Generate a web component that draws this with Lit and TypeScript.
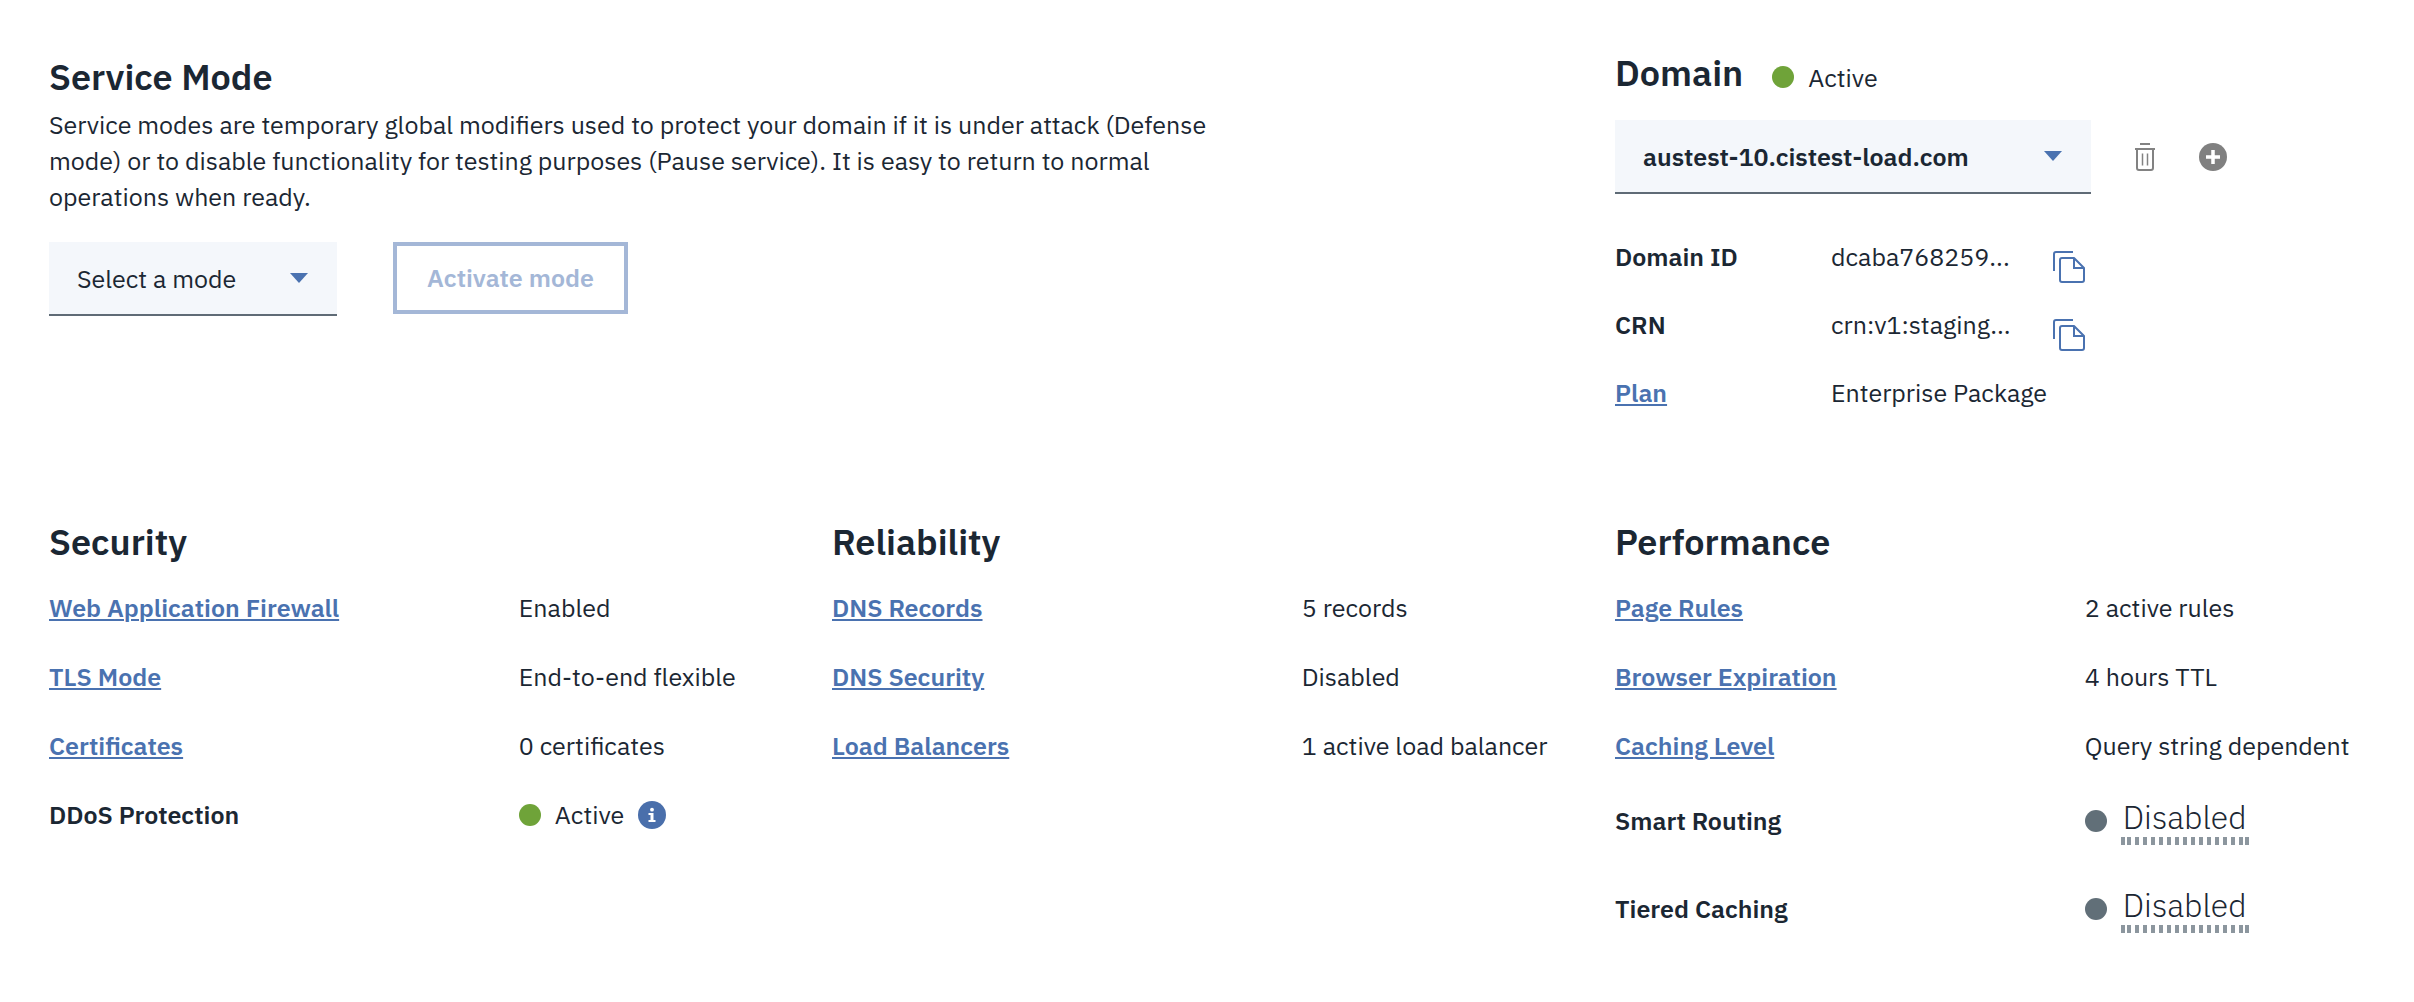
import { LitElement, html, css, nothing, type TemplateResult } from "lit";
import { customElement, property } from "lit/decorators.js";

type Kind = "text" | "status" | "toggle";

interface Entry {
  label: string;
  value: string;
  href?: string;
  kind?: Kind;
}

interface Group {
  title: string;
  entries: Entry[];
}

const GROUPS: Group[] = [
  {
    title: "Security",
    entries: [
      { label: "Web Application Firewall", value: "Enabled", href: "#waf" },
      { label: "TLS Mode", value: "End-to-end flexible", href: "#tls" },
      { label: "Certificates", value: "0 certificates", href: "#certificates" },
      { label: "DDoS Protection", value: "Active", kind: "status" },
    ],
  },
  {
    title: "Reliability",
    entries: [
      { label: "DNS Records", value: "5 records", href: "#dns-records" },
      { label: "DNS Security", value: "Disabled", href: "#dns-security" },
      { label: "Load Balancers", value: "1 active load balancer", href: "#load-balancers" },
    ],
  },
  {
    title: "Performance",
    entries: [
      { label: "Page Rules", value: "2 active rules", href: "#page-rules" },
      { label: "Browser Expiration", value: "4 hours TTL", href: "#browser-expiration" },
      { label: "Caching Level", value: "Query string dependent", href: "#caching-level" },
      { label: "Smart Routing", value: "Disabled", kind: "toggle" },
      { label: "Tiered Caching", value: "Disabled", kind: "toggle" },
    ],
  },
];

const caretIcon = html`<svg class="caret" viewBox="0 0 18 10" aria-hidden="true">
  <path d="M0 0h18L9 10z" fill="#4a72b0" />
</svg>`;

const trashIcon = html`<svg class="icon-trash" viewBox="0 0 20 28" aria-hidden="true">
  <g fill="none" stroke="#828282" stroke-width="2">
    <path d="M5 1h10M0 6h20" />
    <path d="M2 6v19a2 2 0 0 0 2 2h12a2 2 0 0 0 2-2V6" />
    <path d="M7.5 10.5v12M12.5 10.5v12" stroke-width="1.5" />
  </g>
</svg>`;

const addIcon = html`<svg class="icon-round" viewBox="0 0 28 28" aria-hidden="true">
  <circle cx="14" cy="14" r="14" fill="#808080" />
  <path d="M14 7v14M7 14h14" stroke="#fff" stroke-width="3.5" />
</svg>`;

const infoIcon = html`<svg class="icon-round" viewBox="0 0 28 28" aria-hidden="true">
  <circle cx="14" cy="14" r="14" fill="#4a6fab" />
  <circle cx="14" cy="8.7" r="1.9" fill="#fff" />
  <path d="M10.5 12h5v7h2v2h-7v-2h2v-5h-2z" fill="#fff" />
</svg>`;

const copyIcon = html`<svg class="icon-copy" viewBox="0 0 32 32" aria-hidden="true">
  <g fill="none" stroke="#4a72b0" stroke-width="2">
    <path d="M1 20V3a2 2 0 0 1 2-2h17" />
    <path d="M21 7H9a2 2 0 0 0-2 2v20a2 2 0 0 0 2 2h20a2 2 0 0 0 2-2V17z" stroke-linejoin="round" />
    <path d="M21 7v10h10" />
  </g>
</svg>`;

const shared = css`
  :host {
    display: block;
    color: #1b2733;
    font: 400 25px/36px "IBM Plex Sans", Roboto, "Liberation Sans", sans-serif;
  }
  h2 {
    margin: 0;
    font-size: 36px;
    font-weight: 600;
    line-height: 44px;
  }
  a,
  .term {
    font-weight: 600;
  }
  a {
    color: #4a72b0;
    text-decoration: underline;
    text-decoration-thickness: 2px;
    text-underline-offset: 2px;
  }
  button {
    display: block;
    padding: 0;
    border: 0;
    background: none;
    color: inherit;
    font: inherit;
    cursor: pointer;
  }
  svg {
    display: block;
    flex: none;
  }
  .dot {
    flex: none;
    width: 22px;
    height: 22px;
    border-radius: 50%;
    background: #6fa339;
  }
  .dot-off {
    background: #616f78;
  }
  .icon-round {
    width: 28px;
    height: 28px;
  }
`;

@customElement("pick-list")
class PickList extends LitElement {
  @property() label = "";
  @property() option = "";

  static styles = [
    shared,
    css`
      .box {
        display: grid;
        align-items: center;
        background: #f4f7fb;
        border-bottom: 2px solid #5f6b76;
      }
      select,
      .caret {
        grid-area: 1 / 1;
      }
      select {
        width: 100%;
        height: 72px;
        padding: 2px 64px 0 28px;
        border: 0;
        background: none;
        color: inherit;
        font: inherit;
        appearance: none;
      }
      .caret {
        justify-self: end;
        width: 18px;
        height: 10px;
        margin-right: 29px;
        pointer-events: none;
      }
    `,
  ];

  render() {
    return html`<div class="box">
      <select aria-label=${this.label}>
        <option>${this.option}</option>
      </select>
      ${caretIcon}
    </div>`;
  }
}

@customElement("service-mode")
class ServiceMode extends LitElement {
  static styles = [
    shared,
    css`
      p {
        margin: 8px 0 27px;
        max-width: 75%;
      }
      .controls {
        display: flex;
        gap: 56px;
        align-items: flex-start;
      }
      .mode {
        width: 288px;
      }
      .activate {
        padding: 14px 30px;
        border: 4px solid #a4b7d7;
        color: #a4b7d7;
        font-weight: 600;
      }
    `,
  ];

  render() {
    return html`
      <h2>Service Mode</h2>
      <p>
        Service modes are temporary global modifiers used to protect your domain if it is under
        attack (Defense mode) or to disable functionality for testing purposes (Pause service). It
        is easy to return to normal operations when ready.
      </p>
      <div class="controls">
        <pick-list class="mode" label="Service mode" option="Select a mode"></pick-list>
        <button class="activate" disabled>Activate mode</button>
      </div>
    `;
  }
}

@customElement("domain-panel")
class DomainPanel extends LitElement {
  static styles = [
    shared,
    css`
      .head {
        display: flex;
        align-items: center;
      }
      .head .dot {
        margin: 8px 14px 0 29px;
      }
      .state {
        margin-top: 10px;
      }
      .picker {
        display: flex;
        align-items: center;
        margin-top: 24px;
      }
      .domain {
        flex: none;
        width: 476px;
        font-weight: 600;
      }
      .remove {
        margin: 0 44px;
      }
      .icon-trash {
        width: 20px;
        height: 28px;
      }
      .facts {
        display: grid;
        grid-template-columns: 216px 222px 1fr;
        row-gap: 32px;
        margin: 45px 0 0;
      }
      .facts dd {
        margin: 0;
        white-space: nowrap;
      }
      .facts .copy {
        height: 24px;
        margin-top: 12px;
        justify-self: start;
      }
      .icon-copy {
        width: 32px;
        height: 32px;
      }
    `,
  ];

  render() {
    return html`
      <div class="head">
        <h2>Domain</h2>
        <span class="dot"></span>
        <span class="state">Active</span>
      </div>
      <div class="picker">
        <pick-list class="domain" label="Domain" option="austest-10.cistest-load.com"></pick-list>
        <button class="remove" aria-label="Delete domain">${trashIcon}</button>
        <button aria-label="Add domain">${addIcon}</button>
      </div>
      <dl class="facts">
        <dt class="term">Domain ID</dt>
        <dd>dcaba768259...</dd>
        <dd class="copy"><button aria-label="Copy domain ID">${copyIcon}</button></dd>
        <dt class="term">CRN</dt>
        <dd>crn:v1:staging...</dd>
        <dd class="copy"><button aria-label="Copy CRN">${copyIcon}</button></dd>
        <dt><a href="#plan">Plan</a></dt>
        <dd>Enterprise Package</dd>
      </dl>
    `;
  }
}

@customElement("feature-group")
class FeatureGroup extends LitElement {
  @property({ attribute: false }) group!: Group;

  static styles = [
    shared,
    css`
      dl {
        margin: 26px 0 0;
      }
      .row {
        display: grid;
        grid-template-columns: 60% 40%;
        align-items: center;
        margin-bottom: 33px;
      }
      .row-toggle {
        margin-bottom: 40px;
      }
      dd {
        display: flex;
        align-items: center;
        gap: 14px;
        margin: 0;
        white-space: nowrap;
      }
      .toggle {
        padding: 0 2px 8px;
        font-size: 32px;
        font-weight: 300;
        line-height: 40px;
        background:
          linear-gradient(#8c969e, #8c969e) left bottom / 4px 8px no-repeat,
          linear-gradient(#8c969e, #8c969e) right bottom / 4px 8px no-repeat,
          linear-gradient(90deg, #8c969e 2px, transparent 2px 6px, #8c969e 6px)
            left bottom / 8px 8px repeat-x;
      }
    `,
  ];

  private value(entry: Entry): TemplateResult | string {
    switch (entry.kind) {
      case "status":
        return html`<span class="dot"></span>${entry.value}
          <button aria-label="About ${entry.label}">${infoIcon}</button>`;
      case "toggle":
        return html`<span class="dot dot-off"></span><button class="toggle">${entry.value}</button>`;
      default:
        return entry.value;
    }
  }

  render() {
    return html`
      <h2>${this.group?.title ?? nothing}</h2>
      <dl>
        ${this.group?.entries.map(
          (entry) => html`<div class="row ${entry.kind === "toggle" ? "row-toggle" : ""}">
            <dt class="term">
              ${entry.href ? html`<a href=${entry.href}>${entry.label}</a>` : entry.label}
            </dt>
            <dd>${this.value(entry)}</dd>
          </div>`,
        )}
      </dl>
    `;
  }
}

@customElement("app-root")
class AppRoot extends LitElement {
  static styles = [
    shared,
    css`
      :host {
        background: #fff;
      }
      main {
        display: grid;
        grid-template-columns: repeat(3, 1fr);
        padding: 50px 16px 50px 49px;
      }
      .mode {
        grid-column: span 2;
        padding-top: 5px;
      }
      .group {
        margin-top: 109px;
      }
    `,
  ];

  render() {
    return html`<main>
      <service-mode class="mode"></service-mode>
      <domain-panel></domain-panel>
      ${GROUPS.map((group) => html`<feature-group class="group" .group=${group}></feature-group>`)}
    </main>`;
  }
}
